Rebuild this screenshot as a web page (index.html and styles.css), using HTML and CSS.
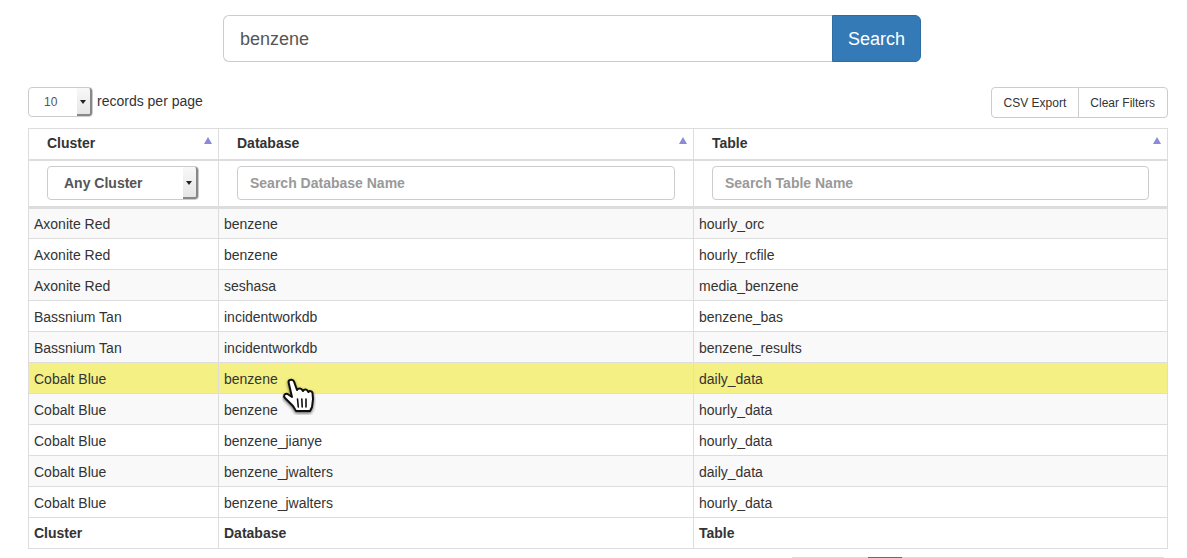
FILE: index.html
```html
<!DOCTYPE html>
<html lang="en">
<head>
    <meta charset="UTF-8">
    <meta name="viewport" content="width=device-width, initial-scale=1.0">
    <title>Table Search</title>
    <link rel="stylesheet" href="styles.css">
</head>
<body>
    <form class="search-bar">
        <input class="search-input" type="text" value="benzene">
        <button class="search-btn" type="button">Search</button>
    </form>

    <div class="toolbar">
        <div class="page-size">
            <span class="select-box select-small">
                <span class="select-value">10</span>
                <span class="select-arrow"></span>
            </span>
            <span class="page-size-label">records per page</span>
        </div>
        <div class="btn-group">
            <button class="tool-btn" type="button">CSV Export</button>
            <button class="tool-btn" type="button">Clear Filters</button>
        </div>
    </div>

    <div class="table-wrap">
        <table class="data-table">
            <colgroup>
                <col class="col-cluster">
                <col class="col-database">
                <col class="col-table">
            </colgroup>
            <thead>
                <tr class="head-row">
                    <th class="sortable">Cluster</th>
                    <th class="sortable">Database</th>
                    <th class="sortable">Table</th>
                </tr>
                <tr class="filter-row">
                    <th>
                        <span class="select-box select-filter">
                            <span class="select-value">Any Cluster</span>
                            <span class="select-arrow"></span>
                        </span>
                    </th>
                    <th><input class="filter-input" type="text" placeholder="Search Database Name"></th>
                    <th><input class="filter-input" type="text" placeholder="Search Table Name"></th>
                </tr>
            </thead>
            <tbody>
                <tr><td>Axonite Red</td><td>benzene</td><td>hourly_orc</td></tr>
                <tr><td>Axonite Red</td><td>benzene</td><td>hourly_rcfile</td></tr>
                <tr><td>Axonite Red</td><td>seshasa</td><td>media_benzene</td></tr>
                <tr><td>Bassnium Tan</td><td>incidentworkdb</td><td>benzene_bas</td></tr>
                <tr><td>Bassnium Tan</td><td>incidentworkdb</td><td>benzene_results</td></tr>
                <tr class="hovered"><td>Cobalt Blue</td><td>benzene</td><td>daily_data</td></tr>
                <tr><td>Cobalt Blue</td><td>benzene</td><td>hourly_data</td></tr>
                <tr><td>Cobalt Blue</td><td>benzene_jianye</td><td>hourly_data</td></tr>
                <tr><td>Cobalt Blue</td><td>benzene_jwalters</td><td>daily_data</td></tr>
                <tr><td>Cobalt Blue</td><td>benzene_jwalters</td><td>hourly_data</td></tr>
            </tbody>
            <tfoot>
                <tr><th>Cluster</th><th>Database</th><th>Table</th></tr>
            </tfoot>
        </table>

        <!-- mouse pointer caught in the screenshot -->
        <svg class="hand-cursor" width="34" height="38" viewBox="0 0 34 38">
            <defs>
                <filter id="hand-shadow" x="-30%" y="-30%" width="160%" height="160%">
                    <feDropShadow dx="0" dy="1.5" stdDeviation="1.5" flood-color="#000" flood-opacity="0.6"/>
                </filter>
            </defs>
            <path filter="url(#hand-shadow)" fill="#fff" stroke="#111" stroke-width="2" stroke-linejoin="round"
                d="M6.500 5C6.500 2.500 11 1.500 12 4.500L15 13c1-2 4.500-2 5.500.5L21 14c1-2 4-2 5 .5l.5.500c1-1.500 3.500-1 4 1L31 22l-1 8-2 4H14l-3-5-8-8c-2-2-.5-5 2.500-4L10 20z"/>
            <path fill="none" stroke="#111" stroke-width="1.600" stroke-linecap="round" d="M15.500 22l.8 8M19.800 22l.4 8M24 22v8"/>
        </svg>
    </div>

    <ul class="pagination">
        <li></li>
        <li class="active"></li>
        <li></li>
        <li></li>
        <li></li>
        <li></li>
        <li></li>
        <li></li>
        <li></li>
    </ul>
</body>
</html>
```

FILE: styles.css
```css
/* General */
body {
    margin: 0;
    height: 558px;
    overflow: hidden;
    background-color: #fff;
    color: #333;
    font-family: "Liberation Sans", Arial, sans-serif;
    font-size: 14px;
}

/* Top search */
.search-bar {
    display: flex;
    width: 698px;
    height: 47px;
    margin: 15px 0 0 223px;
}

.search-input {
    flex: 1;
    min-width: 0;
    box-sizing: border-box;
    padding: 2px 16px 0;
    border: 1px solid #ccc;
    border-right: 0;
    border-radius: 6px 0 0 6px;
    color: #555;
    font-family: inherit;
    font-size: 18px;
}

.search-btn {
    width: 89px;
    padding: 2px 0 0;
    border: 1px solid #2e6da4;
    border-radius: 0 6px 6px 0;
    background-color: #337ab7;
    color: #fff;
    font-family: inherit;
    font-size: 18px;
}

/* Toolbar */
.toolbar {
    display: flex;
    justify-content: space-between;
    align-items: flex-start;
    margin: 25px 19px 0 28px;
    height: 41px;
}

.page-size {
    display: flex;
    align-items: flex-start;
    gap: 4px;
}

.page-size-label {
    line-height: 28px;
}

.select-box {
    display: flex;
    align-items: center;
    box-sizing: border-box;
    position: relative;
    border: 1px solid #ccc;
    border-radius: 4px;
    background-color: #fff;
}

.select-small {
    width: 65px;
    height: 30px;
    padding-left: 15px;
    font-size: 12px;
    color: #555;
}

.select-filter {
    width: 152px;
    height: 34px;
    padding-left: 16px;
    color: #555;
    font-size: 14px;
    font-weight: bold;
}

.select-arrow {
    position: absolute;
    top: 0;
    right: 0;
    bottom: 0;
    width: 13px;
    border-right: 2px solid #888;
    border-bottom: 2px solid #888;
    border-radius: 0 3px 3px 0;
    background: linear-gradient(#f8f8f8, #e6e6e6);
}

.select-arrow::after {
    content: "";
    position: absolute;
    top: 50%;
    left: 3px;
    margin-top: -1px;
    border-top: 4px solid #222;
    border-left: 3.5px solid transparent;
    border-right: 3.5px solid transparent;
}

.btn-group {
    display: flex;
}

.tool-btn {
    height: 31px;
    padding: 0 12px;
    border: 1px solid #ccc;
    background-color: #fff;
    color: #333;
    font-family: inherit;
    font-size: 12px;
}

.tool-btn:first-child {
    border-radius: 4px 0 0 4px;
}

.tool-btn:last-child {
    margin-left: -1px;
    padding-left: 11px;
    border-radius: 0 4px 4px 0;
}

/* Table */
.table-wrap {
    position: relative;
    margin: 0 19px 0 28px;
}

.data-table {
    width: 1140px;
    table-layout: fixed;
    border-collapse: collapse;
    border: 1px solid #ddd;
}

.col-cluster {
    width: 190px;
}

.col-database {
    width: 475px;
}

.data-table th,
.data-table td {
    box-sizing: border-box;
    height: 31px;
    padding: 0 5px;
    border: 1px solid #ddd;
    text-align: left;
    vertical-align: middle;
}

.data-table .head-row th {
    position: relative;
    padding: 0 5px 2px 18px;
    border-bottom-width: 2px;
}

.sortable::after {
    content: "";
    position: absolute;
    top: 8px;
    right: 6px;
    border-bottom: 7px solid #8a8ad8;
    border-left: 4px solid transparent;
    border-right: 4px solid transparent;
}

.data-table .filter-row th {
    height: 48px;
    padding: 0 18px;
    border-bottom: 3px solid #ddd;
}

.filter-input {
    display: block;
    width: 100%;
    height: 34px;
    box-sizing: border-box;
    padding: 0 12px;
    border: 1px solid #ccc;
    border-radius: 4px;
    font-family: inherit;
    font-size: 14px;
    font-weight: bold;
}

.filter-input::placeholder {
    color: #999;
}

.data-table tbody tr + tr td {
    padding-top: 2px;
}

.data-table tbody tr:nth-child(odd) {
    background-color: #f9f9f9;
}

.data-table tbody tr.hovered {
    background-color: #f4f084;
}

.hand-cursor {
    position: absolute;
    left: 254px;
    top: 249px;
}

/* Pagination, only its top edge is inside the window */
.pagination {
    display: flex;
    height: 2px;
    margin: 8px 0 0 792px;
    padding: 0;
    overflow: hidden;
    list-style: none;
}

.pagination li {
    box-sizing: border-box;
    width: 33px;
    height: 34px;
    border: 1px solid #ddd;
    margin-left: -1px;
}

.pagination li:first-child {
    width: 78px;
    border-right: 0;
}

.pagination li.active {
    width: 35px;
    border-color: #337ab7;
    background-color: #337ab7;
}

.pagination li:nth-child(7) {
    width: 40px;
}

.pagination li:nth-child(8) {
    width: 42px;
}

.pagination li:last-child {
    width: 54px;
}
```
